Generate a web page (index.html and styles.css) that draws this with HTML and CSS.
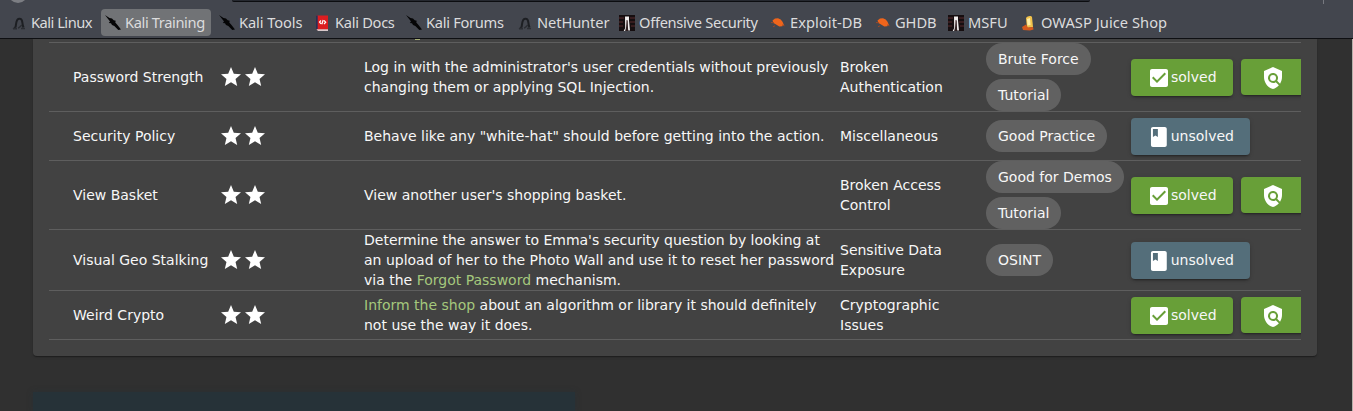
FILE: index.html
```html
<!DOCTYPE html>
<html lang="en">
<head>
<meta charset="utf-8">
<title>Score Board</title>
<link rel="stylesheet" href="styles.css">
</head>
<body>
<svg class="defs" aria-hidden="true">
  <symbol id="hook" viewBox="0 0 16 16"><path d="M1.500 13.500L4 11.500 5.500 13.500z" fill="#23252a"/><path d="M4.500 12.500C5.200 9 5 6.500 6.300 4.800 7.500 3.300 10 3.500 10.800 5.200c.8 1.800.5 4.500 1.700 7.300" fill="none" stroke="#1d1f23" stroke-width="2"/><path d="M2 13.700h4M7 13c1.800-.3 2.500-2.400 4-2.800M10 13.500h4" fill="none" stroke="#2b2d32" stroke-width="1.400"/></symbol>
  <symbol id="dagger" viewBox="0 0 16 16"><path d="M0 0l4.500 3L7 3.400l1.700 1.800 2 .6-.4 1.700 2.200 2.600L16 14.500 13.300 15 9.300 11 7 10 6 8.300 3.800 8 5 6.500 3.300 4.300z" fill="#050506"/></symbol>
  <symbol id="book" viewBox="0 0 16 16"><path d="M1 0.500h12v15H3l-2-2z" fill="#dc1d20"/><path d="M1 .5h1.700V14H1z" fill="#273058"/><path d="M1.500 14.300H13V16H3z" fill="#d9c9cb"/><path d="M6 5.500L4.500 7 6 8.800M9 5.500l1.700 1.700L9 9M8.200 5L6.800 9.300" fill="none" stroke="#fff" stroke-width="1.200"/></symbol>
  <symbol id="offsec" viewBox="0 0 16 16"><path d="M0 0h16v16H0z" fill="#160e10"/><path d="M0 3h5M11 3h5M0 7h4M11 7h5M0 11h4M12 11h4" stroke="#592b2c"/><path d="M6 1.500h4v4l1 10H9.200L8.500 6 8 5.500 7.200 12l-1 4H4.700l1.500-3z" fill="#f1eded"/><path d="M8 5v11" stroke="#4b3537" stroke-width="1"/></symbol>
  <symbol id="bug" viewBox="0 0 16 16"><path d="M2.500 5.500l2.500-2 3-.3 2.700 1.200 1.800 2.300 1.300 3-1.500 1.500-3 .3L6.500 9.800 3.500 8z" fill="#ef651c"/><path d="M1 7.500l3 .3M5 10.800l-2 1M12 10l2.500.8" stroke="#9a4928"/></symbol>
  <symbol id="juice" viewBox="0 0 16 16"><path d="M5 3c1-2 5-3 6-1l1 10-6 1z" fill="#f3c34c"/><path d="M6 4l3-1 .5 7-3 .5z" fill="#fff0a8"/><path d="M1 12l4-2.500 2 3 5-.5.500 2.500-3.500 1L2 15z" fill="#d65a1d"/></symbol>
  <symbol id="star" viewBox="0 0 24 24"><path d="M12 17.270L18.180 21l-1.640-7.030L22 9.240l-7.190-.61L12 2 9.190 8.630 2 9.240l5.460 4.730L5.820 21z"/></symbol>
  <symbol id="check" viewBox="0 0 24 24"><path d="M19 3H5c-1.110 0-2 .9-2 2v14c0 1.100.89 2 2 2h14c1.110 0 2-.9 2-2V5c0-1.100-.89-2-2-2zm-9 14l-5-5 1.410-1.410L10 14.170l7.590-7.590L19 8l-9 9z"/></symbol>
  <symbol id="unsolved" viewBox="0 0 24 24"><path d="M18 2H6c-1.100 0-2 .9-2 2v16c0 1.100.9 2 2 2h12c1.100 0 2-.9 2-2V4c0-1.100-.9-2-2-2zM6 4h5v8l-2.500-1.500L6 12V4z"/></symbol>
  <symbol id="policy" viewBox="0 0 24 24"><path d="M21 5l-9-4-9 4v6c0 5.550 3.840 10.740 9 12 2.300-.56 4.330-1.900 5.880-3.710l-3.120-3.120a5 5 0 1 1 1.410-1.410l2.900 2.900C20.290 15.690 21 13.380 21 11V5z"/><circle cx="12" cy="12" r="3"/></symbol>
</svg>
<header class="browser">
  <div class="navbar"><i class="back"></i><i class="urlbar"></i><i class="divider"></i></div>
  <nav class="bookmarks">
    <a class="bm linux"><svg><use href="#hook"/></svg><span>Kali Linux</span></a>
    <a class="bm training"><svg><use href="#dagger"/></svg><span>Kali Training</span></a>
    <a class="bm tools"><svg><use href="#dagger"/></svg><span>Kali Tools</span></a>
    <a class="bm docs"><svg><use href="#book"/></svg><span>Kali Docs</span></a>
    <a class="bm forums"><svg><use href="#dagger"/></svg><span>Kali Forums</span></a>
    <a class="bm nethunter"><svg><use href="#hook"/></svg><span>NetHunter</span></a>
    <a class="bm offensive"><svg><use href="#offsec"/></svg><span>Offensive Security</span></a>
    <a class="bm exploit"><svg><use href="#bug"/></svg><span>Exploit-DB</span></a>
    <a class="bm ghdb"><svg><use href="#bug"/></svg><span>GHDB</span></a>
    <a class="bm msfu"><svg><use href="#offsec"/></svg><span>MSFU</span></a>
    <a class="bm owasp"><svg><use href="#juice"/></svg><span>OWASP Juice Shop</span></a>
  </nav>
</header>
<main class="page">
  <section class="card">
    <div class="table">
      <div class="row peek"><i class="sliver"></i></div>
      <div class="row tall">
        <div class="name">Password Strength</div>
        <div class="stars"><svg><use href="#star"/></svg><svg><use href="#star"/></svg></div>
        <div class="desc">Log in with the administrator's user credentials without previously<br>changing them or applying SQL Injection.</div>
        <div>Broken<br>Authentication</div>
        <div class="tags"><span class="tag">Brute Force</span><span class="tag">Tutorial</span></div>
        <div class="status"><button class="btn solved"><svg><use href="#check"/></svg>solved</button><button class="btn review"><svg><use href="#policy"/></svg></button></div>
      </div>
      <div class="row">
        <div class="name">Security Policy</div>
        <div class="stars"><svg><use href="#star"/></svg><svg><use href="#star"/></svg></div>
        <div class="desc">Behave like any "white-hat" should before getting into the action.</div>
        <div>Miscellaneous</div>
        <div class="tags"><span class="tag">Good Practice</span></div>
        <div class="status"><button class="btn unsolved"><svg><use href="#unsolved"/></svg>unsolved</button></div>
      </div>
      <div class="row tall">
        <div class="name">View Basket</div>
        <div class="stars"><svg><use href="#star"/></svg><svg><use href="#star"/></svg></div>
        <div class="desc">View another user's shopping basket.</div>
        <div>Broken Access<br>Control</div>
        <div class="tags"><span class="tag">Good for Demos</span><span class="tag">Tutorial</span></div>
        <div class="status"><button class="btn solved"><svg><use href="#check"/></svg>solved</button><button class="btn review"><svg><use href="#policy"/></svg></button></div>
      </div>
      <div class="row medium">
        <div class="name">Visual Geo Stalking</div>
        <div class="stars"><svg><use href="#star"/></svg><svg><use href="#star"/></svg></div>
        <div class="desc">Determine the answer to Emma's security question by looking at<br>an upload of her to the Photo Wall and use it to reset her password<br>via the <a>Forgot Password</a> mechanism.</div>
        <div>Sensitive Data<br>Exposure</div>
        <div class="tags"><span class="tag">OSINT</span></div>
        <div class="status"><button class="btn unsolved"><svg><use href="#unsolved"/></svg>unsolved</button></div>
      </div>
      <div class="row">
        <div class="name">Weird Crypto</div>
        <div class="stars"><svg><use href="#star"/></svg><svg><use href="#star"/></svg></div>
        <div class="desc"><a>Inform the shop</a> about an algorithm or library it should definitely<br>not use the way it does.</div>
        <div>Cryptographic<br>Issues</div>
        <div class="tags"></div>
        <div class="status"><button class="btn solved"><svg><use href="#check"/></svg>solved</button><button class="btn review"><svg><use href="#policy"/></svg></button></div>
      </div>
    </div>
  </section>
  <div class="cookie"></div>
</main>
</body>
</html>
```
FILE: styles.css
```css
* { box-sizing: border-box; }
body { margin: 0; height: 411px; overflow: hidden; background: #303030; color: #f7f7f7; font: 14px/20px "DejaVu Sans", sans-serif; }
.defs { position: absolute; width: 0; height: 0; }
.browser { height: 39px; background: #43464e; border-bottom: 1px solid #0e0f12; overflow: hidden; }
.navbar { display: flex; height: 4px; align-items: flex-start; }
.back { width: 20px; height: 20px; margin: -17px 0 0 8px; border-radius: 50%; background: #7c7e83; flex: none; }
.urlbar { width: 858px; height: 2px; margin-left: 204px; background: #25282f; border-bottom: 1px solid #0c0d10; border-radius: 0 0 3px 3px; }
.divider { width: 1px; height: 4px; margin-left: 233px; background: #777980; }
.bookmarks { display: flex; height: 34px; padding: 5px 0 2px 5px; }
.bm { display: flex; align-items: center; height: 27px; padding-left: 6px; border-radius: 4px; color: #dcdcdd; font: 14.670px/27px "Noto Sans", sans-serif; white-space: nowrap; flex: none; }
.bm svg { width: 16px; height: 16px; margin-right: 4px; flex: none; }
.linux { width: 96px; letter-spacing: -.5px; }
.training { width: 110px; margin-right: 2px; padding-left: 4px; background: #717376; letter-spacing: -.38px; }
.tools { width: 96px; letter-spacing: -.1px; }
.docs { width: 91px; letter-spacing: -.3px; }
.forums { width: 111px; letter-spacing: -.3px; }
.nethunter { width: 102px; letter-spacing: -.1px; }
.offensive { width: 151px; letter-spacing: -.3px; }
.exploit { width: 105px; letter-spacing: .05px; }
.ghdb { width: 73px; letter-spacing: -.05px; }
.msfu { width: 73px; }
.owasp { letter-spacing: .05px; }
.page { padding: 0 35px 0 33px; height: 372px; border-right: 1px solid #b5b0aa; overflow: hidden; }
.card { height: 317px; padding: 0 16px; background: #424242; border-radius: 0 0 4px 4px; box-shadow: 0 2px 1px -1px rgba(0,0,0,.2), 0 1px 1px rgba(0,0,0,.14), 0 1px 3px rgba(0,0,0,.12); }
.table { width: 1252px; overflow: hidden; }
.row { display: grid; grid-template-columns: 170px 145px 476px 146px 145px 170px; height: 49px; align-items: center; border-bottom: 1px solid #5e5e5e; white-space: nowrap; }
.row.peek { display: flex; align-items: flex-start; height: 4px; }
.sliver { width: 5px; height: 1px; margin-left: 366px; background: #a9b177; }
.row.tall { height: 69px; }
.row.medium { height: 61px; }
.name { padding-left: 24px; }
.stars { display: flex; fill: #fff; }
.stars svg { width: 24px; height: 24px; }
.desc a { color: #a5c87d; }
.tags { display: flex; flex-direction: column; align-items: flex-start; gap: 4px; }
.tag { height: 32px; padding: 6px 12px; border-radius: 16px; background: #616161; }
.status { display: flex; align-items: flex-start; gap: 8px; }
.btn { display: flex; align-items: center; flex: none; height: 37px; margin: 0; padding: 0 16px; border: 0; border-radius: 4px; color: #f7f7f7; font: 14px/36px "DejaVu Sans", sans-serif; box-shadow: 0 3px 1px -2px rgba(0,0,0,.2), 0 2px 2px rgba(0,0,0,.14), 0 1px 5px rgba(0,0,0,.12); }
.btn svg { width: 24px; height: 24px; margin-top: 2px; fill: #fff; }
.solved { width: 102px; background: #689f38; }
.unsolved { width: 119px; background: #546e7a; }
.review { width: 64px; height: 36px; padding: 0 20px; background: #689f38; }
.cookie { width: 542px; height: 20px; margin-top: 36px; background: #263238; box-shadow: 0 0 5px rgba(38,50,56,.6); }
```
